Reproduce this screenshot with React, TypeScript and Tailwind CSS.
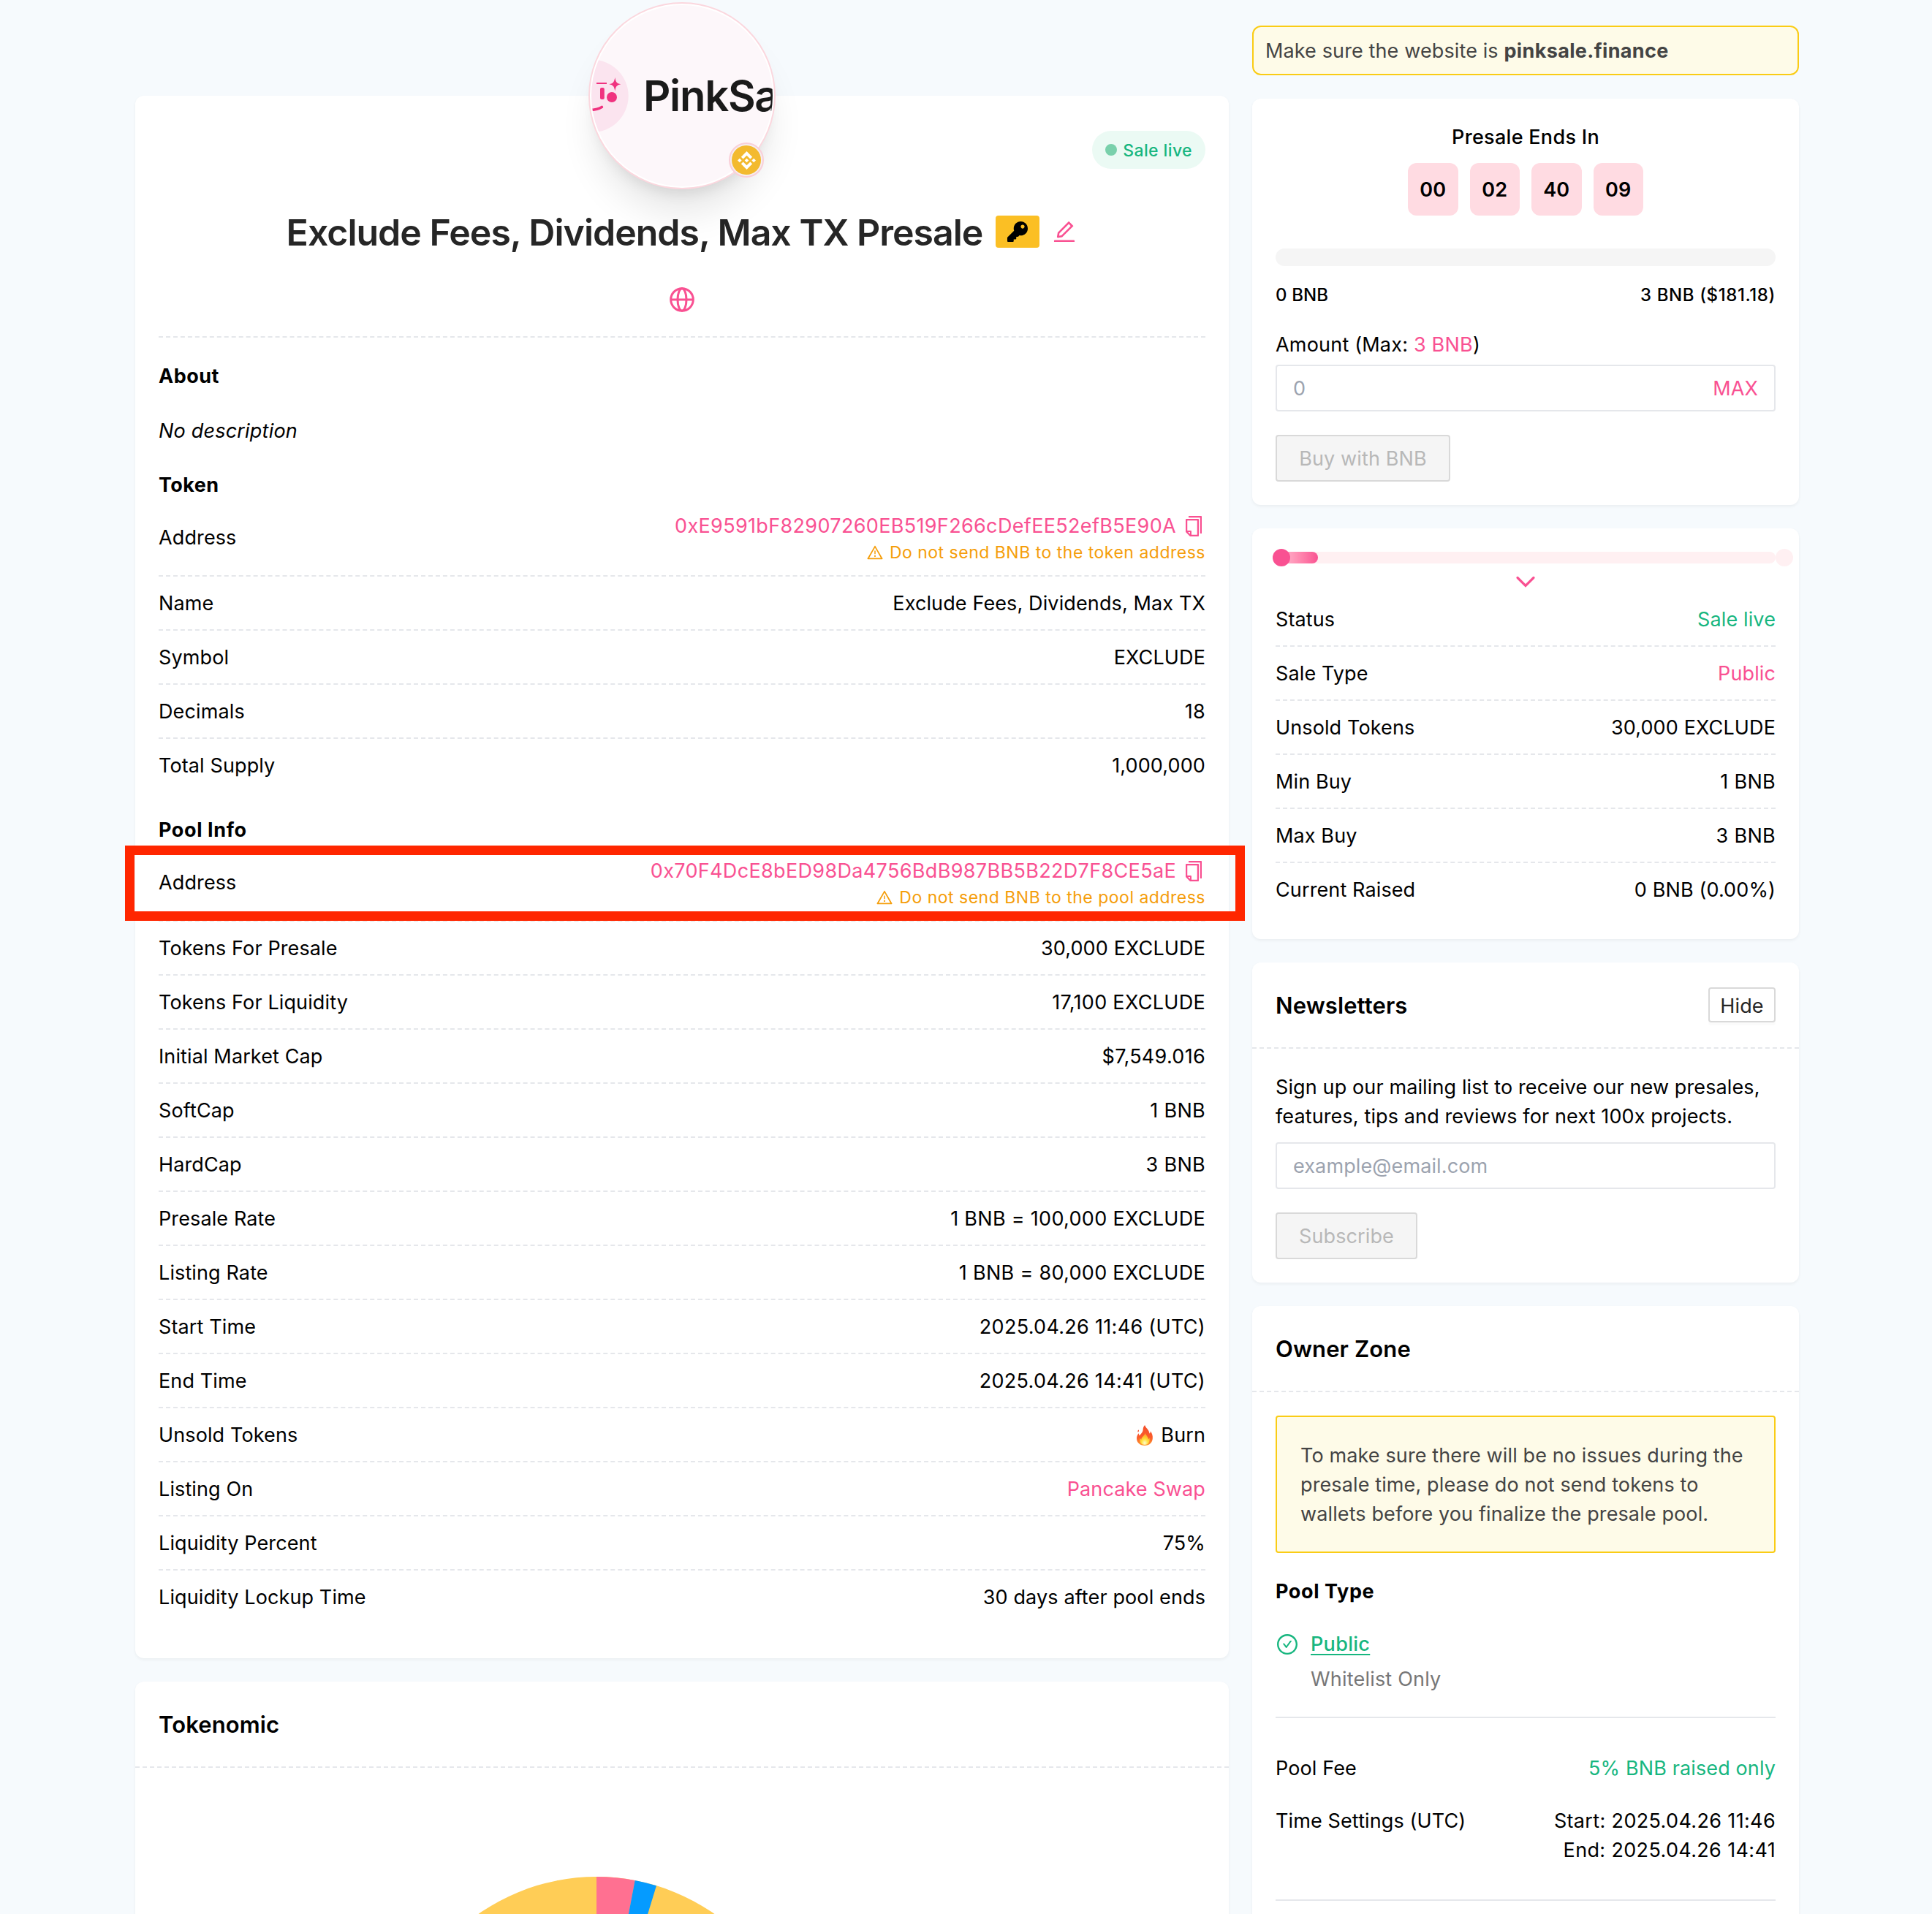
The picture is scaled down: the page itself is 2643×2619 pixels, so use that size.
import type { ReactNode } from "react";
import {
  AiOutlineCheckCircle,
  AiOutlineCopy,
  AiOutlineEdit,
  AiOutlineWarning,
} from "react-icons/ai";
import { FaKey } from "react-icons/fa";
import { SiBinance } from "react-icons/si";

interface Item {
  label: string;
  value: ReactNode;
  tone?: "pink" | "green";
  wide?: boolean;
}

const tokenRows: Item[] = [
  { label: "Name", value: "Exclude Fees, Dividends, Max TX" },
  { label: "Symbol", value: "EXCLUDE" },
  { label: "Decimals", value: "18", wide: true },
  { label: "Total Supply", value: "1,000,000" },
];

const poolRows: Item[] = [
  { label: "Tokens For Presale", value: "30,000 EXCLUDE" },
  { label: "Tokens For Liquidity", value: "17,100 EXCLUDE", wide: true },
  { label: "Initial Market Cap", value: "$7,549.016", wide: true },
  { label: "SoftCap", value: "1 BNB", wide: true },
  { label: "HardCap", value: "3 BNB", wide: true },
  { label: "Presale Rate", value: "1 BNB = 100,000 EXCLUDE", wide: true },
  { label: "Listing Rate", value: "1 BNB = 80,000 EXCLUDE", wide: true },
  { label: "Start Time", value: "2025.04.26 11:46 (UTC)", wide: true },
  { label: "End Time", value: "2025.04.26 14:41 (UTC)", wide: true },
  { label: "Unsold Tokens", value: <Burn /> },
  { label: "Listing On", value: "Pancake Swap", tone: "pink" },
  { label: "Liquidity Percent", value: "75%" },
  { label: "Liquidity Lockup Time", value: "30 days after pool ends" },
];

const statusRows: Item[] = [
  { label: "Status", value: "Sale live", tone: "green" },
  { label: "Sale Type", value: "Public", tone: "pink" },
  { label: "Unsold Tokens", value: "30,000 EXCLUDE" },
  { label: "Min Buy", value: "1 BNB", wide: true },
  { label: "Max Buy", value: "3 BNB", wide: true },
  { label: "Current Raised", value: "0 BNB (0.00%)" },
];

const toneClass = {
  pink: "text-[#f95192]",
  green: "text-[#17b67f]",
};

function Burn() {
  return (
    <span className="flex items-center gap-[10px]">
      <svg width="24" height="30" viewBox="0 0 24 30">
        <defs>
          <linearGradient id="flame" x1="0" y1="0" x2="0" y2="1">
            <stop offset="0" stopColor="#f4502c" />
            <stop offset="0.6" stopColor="#fb5b2a" />
            <stop offset="1" stopColor="#fd9a2e" />
          </linearGradient>
          <radialGradient id="flame-core" cx="0.5" cy="0.85" r="0.75">
            <stop offset="0" stopColor="#fffbd0" />
            <stop offset="0.45" stopColor="#ffe03a" />
            <stop offset="1" stopColor="#ff9d2b" />
          </radialGradient>
        </defs>
        <path
          fill="url(#flame)"
          d="M12.2 1c1 4 5.6 5.800 6.300 11.500 1.200-.8 1.400-2 1.300-3.300 2.200 3 3.400 6 3 10.300C22.300 25 18.500 29 12 29S1.300 25 1 19.800c-.2-3.300 1.400-5.300 2.300-7.500.8 1 1 2 1.100 3.200C6.500 13.300 9.400 11 9.600 7.400c.2-2.600.9-4.900 2.600-6.400Z"
        />
        <path fill="#f4502c" d="M3.800 7.600c-1.400.6-1.700 2-1 3.200 1-.6 1.500-1.800 1-3.200Z" />
        <path
          fill="url(#flame-core)"
          d="M12.800 11.500c.4 3.500 4 5 4.200 9 .8-.5 1.200-1.300 1.300-2.200 1.600 5-1.300 9.700-6.300 9.700-5.200 0-8-4.500-6.300-9.300.4 1 .9 1.600 1.700 2 .2-4 4.500-5 5.400-9.200Z"
        />
      </svg>
      Burn
    </span>
  );
}

function Row({ label, value, tone, wide }: Item) {
  return (
    <div className="flex items-center justify-between border-b-2 border-dashed border-[#e5e7eb] pb-[15px] pt-[17px] last:border-b-0">
      <span>{label}</span>
      <span className={`${tone ? toneClass[tone] : ""} ${wide ? "tracking-[0.3px]" : ""}`}>
        {value}
      </span>
    </div>
  );
}

function AddressRow({ address, kind }: { address: string; kind: string }) {
  return (
    <div className="flex items-center justify-between border-b-2 border-dashed border-[#e5e7eb] pb-[15px] pt-[17px]">
      <span>Address</span>
      <div className="flex flex-col items-end">
        <div className="flex items-center gap-2 tracking-[0.34px] text-[#f95192]">
          <span>{address}</span>
          <AiOutlineCopy size={32} />
        </div>
        <div className="flex items-center gap-2 text-[23px] leading-8 tracking-[0.5px] text-[#f59e0b]">
          <AiOutlineWarning size={24} />
          <span>Do not send BNB to the {kind} address</span>
        </div>
      </div>
    </div>
  );
}

function Card({ className = "", children }: { className?: string; children: ReactNode }) {
  return (
    <section className={`rounded-xl bg-white shadow-[0_2px_4px_rgba(0,0,0,0.05)] ${className}`}>
      {children}
    </section>
  );
}

function CardHeader({ title, children }: { title: string; children?: ReactNode }) {
  return (
    <div className="flex h-[118px] items-center justify-between border-b-2 border-dashed border-[#e5e7eb] px-8">
      <h2 className="pt-px text-[31px] font-semibold">{title}</h2>
      {children}
    </div>
  );
}

function DisabledButton({ className, children }: { className: string; children: ReactNode }) {
  return (
    <button
      disabled
      className={`mt-8 block h-16 rounded border-2 border-[#d9d9d9] bg-[#f5f5f5] pt-0.5 text-[#b8b8b8] ${className}`}
    >
      {children}
    </button>
  );
}

function PoolLogo() {
  return (
    <div className="relative mx-auto -mt-32 h-64 w-64 rounded-full border-2 border-[#fbd7de] bg-white p-0.5 shadow-[0_40px_50px_-10px_rgba(0,0,0,0.1),0_16px_20px_-12px_rgba(0,0,0,0.1)]">
      <div className="relative flex h-full items-center overflow-hidden rounded-full bg-[#fdf7fa]">
        <svg className="absolute left-0 top-0" width="248" height="248" viewBox="809 7 248 248">
          <circle cx="810" cy="131.300" r="49.700" fill="#fbe4ef" />
          <g fill="#f0327f">
            <rect x="816" y="113" width="14" height="2" />
            <rect x="821" y="120" width="5.800" height="16" rx="2" />
            <circle cx="837" cy="133" r="7" />
            <path d="M841.300 106c1 6 2.200 8.200 8 9.300-5.800 1.200-7 3.300-8 9.300-1-6-2.200-8.100-8-9.300 5.800-1.100 7-3.300 8-9.300Z" />
          </g>
          <path d="M808 150.500q9-.2 15.300-4" fill="none" stroke="#f0327f" strokeWidth="3.600" strokeLinecap="round" />
        </svg>
        <span className="ml-[71px] whitespace-nowrap text-[58px] font-semibold tracking-[-1.300px] text-[#1a1a1a]">
          PinkSa
        </span>
      </div>
      <div className="absolute bottom-[14px] right-[14px] flex h-12 w-12 items-center justify-center rounded-full border-2 border-[#f9cfd8] bg-[#f5eef0]">
        <div className="flex h-10 w-10 items-center justify-center rounded-full bg-[#f3ba2f] text-white">
          <SiBinance size={25} />
        </div>
      </div>
    </div>
  );
}

// 3% presale, 1.71% liquidity, the rest is unlocked
function TokenomicChart() {
  return (
    <svg className="ml-[350px] mt-[149px] shrink-0" width="562" height="562" viewBox="-281 -281 562 562">
      <circle r="281" fill="#ffcd56" />
      <path d="M0 0V-281A281 281 0 0 1 52.650 -276.020Z" fill="#ff7091" />
      <path d="M0 0L52.650 -276.020A281 281 0 0 1 81.970 -268.780Z" fill="#059bff" />
    </svg>
  );
}

export default function App() {
  return (
    <div className="flex h-[2619px] w-[2643px] gap-8 overflow-hidden bg-[#f6fafd] pl-[185px] font-[Inter,'Liberation_Sans',sans-serif] text-[27px] leading-10 tracking-[0.12px] text-black">
      <main className="flex w-[1496px] flex-col gap-8 pt-[131px]">
        <Card className="relative px-8 pb-12">
          <PoolLogo />
          <div className="absolute right-8 top-12 flex h-[52px] items-center gap-2 rounded-full bg-[#ebfaf4] px-[18px] text-[23px] font-medium tracking-[0.4px] text-[#17b67f]">
            <span className="h-4 w-4 rounded-full bg-[#79d0ab]" />
            <span className="pt-px">Sale live</span>
          </div>

          <div className="mt-[26px] flex h-16 items-center justify-center">
            <h1 className="pt-0.5 text-[50px] font-semibold tracking-[-1px] text-[#262626]">
              Exclude Fees, Dividends, Max TX Presale
            </h1>
            <span className="ml-[18px] flex h-11 w-[60px] items-center justify-center rounded bg-[#fbbf24]">
              <FaKey size={28} />
            </span>
            <AiOutlineEdit className="ml-4 text-[#f95192]" size={36} />
          </div>

          <div className="mt-11 flex justify-center border-b-2 border-dashed border-[#e5e7eb] pb-[33px]">
            <svg width="34" height="34" viewBox="0 0 34 34" fill="none" stroke="#f95192" strokeWidth="3">
              <circle cx="17" cy="17" r="15.300" />
              <ellipse cx="17" cy="17" rx="6" ry="15.300" />
              <path d="M1.600 17h30.800" />
            </svg>
          </div>

          <h3 className="mt-[33px] font-bold tracking-[0.5px]">About</h3>
          <p className="mt-[35px] italic tracking-[0.2px]">No description</p>

          <h3 className="mt-[34px] font-bold tracking-[0.4px]">Token</h3>
          <div className="-mt-px">
            <AddressRow address="0xE9591bF82907260EB519F266cDefEE52efB5E90A" kind="token" />
            {tokenRows.map((row) => (
              <Row key={row.label} {...row} />
            ))}
          </div>

          <h3 className="mt-[33px] font-bold tracking-[0.6px]">Pool Info</h3>
          <div className="relative -mt-px">
            <div>
              <AddressRow address="0x70F4DcE8bED98Da4756BdB987BB5B22D7F8CE5aE" kind="pool" />
              {poolRows.map((row) => (
                <Row key={row.label} {...row} />
              ))}
            </div>
            <div className="pointer-events-none absolute -left-[46px] top-[2px] h-[103px] w-[1532px] border-[13px] border-[#ff2600]" />
          </div>
        </Card>

        <Card className="h-[900px] shrink-0">
          <CardHeader title="Tokenomic" />
          <TokenomicChart />
        </Card>
      </main>

      <aside className="flex w-[748px] flex-col gap-8 pt-[35px]">
        <div className="rounded-xl border-2 border-[#facc15] bg-[#fefbe8] px-4 pb-[11px] pt-[13px] text-[#444444]">
          Make sure the website is{" "}
          <b className="font-bold tracking-[0.35px]">pinksale.finance</b>
        </div>

        <Card className="p-8">
          <p className="pt-px text-center font-medium tracking-[0.3px]">Presale Ends In</p>
          <div className="mt-[15px] flex justify-center gap-4">
            {["00", "02", "40", "09"].map((part) => (
              <span
                key={part}
                className="flex h-[72px] w-[68.500px] items-center justify-center rounded-xl bg-[#ffdbe2] pt-0.5 font-semibold"
              >
                {part}
              </span>
            ))}
          </div>
          <div className="mt-[45px] h-6 rounded-full bg-[#f5f5f5]" />
          <div className="mt-6 flex justify-between text-[24px] font-medium leading-8">
            <span>0 BNB</span>
            <span className="tracking-[0.6px]">3 BNB ($181.18)</span>
          </div>
          <p className="mt-8 tracking-[0.2px]">
            Amount (Max: <span className="text-[#f95192]">3 BNB</span>)
          </p>
          <div className="mt-[7px] flex h-16 items-center justify-between rounded border-2 border-[#e5e7eb] px-[22px] pt-0.5">
            <span className="text-[#9ca3af]">0</span>
            <span className="text-[#f95192]">MAX</span>
          </div>
          <DisabledButton className="w-[239px]">Buy with BNB</DisabledButton>
        </Card>

        <Card className="p-8">
          <div className="relative h-4 rounded-full bg-[#fff0f2]">
            <div className="h-4 w-[58px] rounded-full bg-linear-to-r from-[#ffc5d8] to-[#f95192]" />
            <span className="absolute -left-1 -top-1 h-6 w-6 rounded-full bg-[#f95192]" />
            <span className="absolute -right-6 -top-1 h-6 w-6 rounded-full bg-[#fff0f2]" />
          </div>
          <div className="flex h-10 justify-center pt-4">
            <svg width="28" height="18" viewBox="0 0 28 18" fill="none" stroke="#f95192" strokeWidth="3.200" strokeLinecap="round">
              <path d="M3 3.500l11 11 11-11" />
            </svg>
          </div>
          <div>
            {statusRows.map((row) => (
              <Row key={row.label} {...row} />
            ))}
          </div>
        </Card>

        <Card>
          <CardHeader title="Newsletters">
            <button className="h-12 w-[92px] rounded border-2 border-[#d9d9d9] pt-0.5 leading-none text-[#262626] shadow-[0_4px_0_rgba(0,0,0,0.015)]">
              Hide
            </button>
          </CardHeader>
          <div className="p-8">
            <p className="pt-px">
              Sign up our mailing list to receive our new presales,
              <br />
              features, tips and reviews for next 100x projects.
            </p>
            <div className="mt-[15px] flex h-16 items-center rounded border-2 border-[#e5e7eb] px-[22px] pt-0.5 text-[#9ca3af]">
              example@email.com
            </div>
            <DisabledButton className="w-[194px]">Subscribe</DisabledButton>
          </div>
        </Card>

        <Card className="h-[1000px] shrink-0">
          <CardHeader title="Owner Zone" />
          <div className="p-8">
            <div className="rounded border-2 border-[#facc15] bg-[#fefbe8] px-8 pb-[31px] pt-[33px] text-[#444444]">
              To make sure there will be no issues during the
              <br />
              presale time, please do not send tokens to
              <br />
              wallets before you finalize the presale pool.
            </div>
            <h3 className="mt-[33px] font-bold tracking-[0.6px]">Pool Type</h3>
            <div className="mt-[31px] flex items-center gap-4 text-[#17b67f]">
              <AiOutlineCheckCircle size={32} />
              <span className="pt-px font-medium tracking-[0.3px] underline decoration-2 underline-offset-4">
                Public
              </span>
            </div>
            <p className="mt-2 pl-12 tracking-[0.2px] text-[#777777]">Whitelist Only</p>
            <hr className="mt-[31px] border-t-2 border-[#e5e7eb]" />
            <div className="mt-[49px] flex justify-between">
              <span>Pool Fee</span>
              <span className="text-[#17b67f]">5% BNB raised only</span>
            </div>
            <div className="mt-8 flex justify-between">
              <span>Time Settings (UTC)</span>
              <div className="text-right tracking-[0.35px]">
                <p>Start: 2025.04.26 11:46</p>
                <p>End: 2025.04.26 14:41</p>
              </div>
            </div>
            <hr className="mt-[47px] border-t-2 border-[#e5e7eb]" />
          </div>
        </Card>
      </aside>
    </div>
  );
}
